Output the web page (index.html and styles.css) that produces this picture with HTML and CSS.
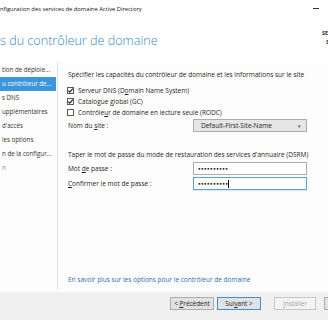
FILE: index.html
```html
<!DOCTYPE html>
<html lang="fr">
<head>
    <meta charset="UTF-8">
    <meta name="viewport" content="width=device-width, initial-scale=1.0">
    <title>Assistant Configuration des services de domaine Active Directory</title>
    <link rel="stylesheet" href="styles.css">
</head>
<body>
    <div class="window">
        <div class="titlebar">
            <span class="caption">nfiguration des services de domaine Active Directory</span>
            <span class="min"></span>
        </div>

        <div class="header">
            <h1>s du contrôleur de domaine</h1>
            <div class="target">
                <div class="target-label">SERVEUR CIBLE</div>
                <div class="target-name">SRV-DC01</div>
            </div>
        </div>

        <div class="main">
            <ul class="steps">
                <li>tion de déploie...</li>
                <li class="active">u contrôleur de...</li>
                <li>s DNS</li>
                <li>upplémentaires</li>
                <li>d'accès</li>
                <li>les options</li>
                <li>n de la configur...</li>
                <li class="later">n</li>
            </ul>

            <div class="content">
                <p class="intro">Spécifier les capacités du contrôleur de domaine et les informations sur le site</p>

                <div class="check-row">
                    <span class="checkbox checked"><svg viewBox="0 0 7 7" width="7" height="7"><polyline points="1.3,3.6 2.8,5.2 5.8,1.6" fill="none" stroke="#222" stroke-width="1.2"/></svg></span>
                    <span>Serveur DNS (D<u>o</u>main Name System)</span>
                </div>
                <div class="check-row">
                    <span class="checkbox checked"><svg viewBox="0 0 7 7" width="7" height="7"><polyline points="1.3,3.6 2.8,5.2 5.8,1.6" fill="none" stroke="#222" stroke-width="1.2"/></svg></span>
                    <span>Catalogue <u>g</u>lobal (GC)</span>
                </div>
                <div class="check-row">
                    <span class="checkbox"></span>
                    <span>Contrôle<u>u</u>r de domaine en lecture seule (RODC)</span>
                </div>

                <div class="field-row site-row">
                    <span class="label">Nom du <u>s</u>ite :</span>
                    <div class="select">
                        <span>Default-First-Site-Name</span>
                        <span class="arrow">&#9662;</span>
                    </div>
                </div>

                <p class="intro dsrm">Taper le mot de passe du mode de restauration des services d'annuaire (DSRM)</p>

                <div class="field-row">
                    <span class="label">Mot <u>d</u>e passe :</span>
                    <div class="textbox">●●●●●●●●●●</div>
                </div>
                <div class="field-row">
                    <span class="label"><u>C</u>onfirmer le mot de passe :</span>
                    <div class="textbox focused">●●●●●●●●●●<span class="caret"></span></div>
                </div>

                <a class="more-link" href="#">En savoir plus sur les options pour le contrôleur de domaine</a>
            </div>
        </div>

        <div class="footer">
            <button class="btn">&lt; <u>P</u>récédent</button>
            <button class="btn default">Sui<u>v</u>ant &gt;</button>
            <button class="btn disabled"><u>I</u>nstaller</button>
            <button class="btn">Annuler</button>
        </div>
    </div>
</body>
</html>
```

FILE: styles.css
```css
* {
    margin: 0;
    padding: 0;
    box-sizing: border-box;
    font-family: 'Open Sans', 'Liberation Sans', sans-serif;
}

body {
    background-color: #ffffff;
    overflow: hidden;
}

.window {
    width: 328px;
    height: 320px;
    display: flex;
    flex-direction: column;
    overflow: hidden;
    color: #1e1e1e;
    font-size: 6.5px;
}

.titlebar {
    height: 17px;
    display: flex;
    align-items: center;
    background-color: #ffffff;
    flex-shrink: 0;
}

.caption {
    font-size: 5.8px;
    color: #111;
    white-space: nowrap;
}

.min {
    width: 6px;
    height: 1px;
    background-color: #333;
    margin-left: auto;
    margin-right: 9px;
}

.header {
    height: 45px;
    display: flex;
    align-items: flex-start;
    background-color: #ffffff;
    flex-shrink: 0;
}

.header h1 {
    margin-top: 16px;
    font-size: 12.6px;
    line-height: 16px;
    font-weight: 300;
    color: #3688c6;
    white-space: nowrap;
}

.target {
    margin-left: auto;
    margin-top: 12px;
    width: 6px;
    overflow: hidden;
    white-space: nowrap;
    font-size: 5.6px;
    font-weight: bold;
    line-height: 9px;
    color: #333;
}

.target-name {
    padding-left: 4px;
}

.main {
    flex: 1;
    display: flex;
    background-color: #fdfdfd;
}

.steps {
    width: 58px;
    list-style: none;
    padding-top: 1px;
    border-right: 1px solid #e3e3e3;
    margin-bottom: 2px;
    font-size: 6.2px;
}

.steps li {
    height: 14px;
    line-height: 14px;
    padding-left: 2px;
    margin-right: 1px;
    white-space: nowrap;
    overflow: hidden;
    color: #333;
}

.steps li.active {
    background-color: #3c96dc;
    color: #ffffff;
}

.steps li.later {
    color: #888;
}

.content {
    flex: 1;
    display: flex;
    flex-direction: column;
    padding: 8px 0 7px 10px;
}

.intro {
    line-height: 10px;
    white-space: nowrap;
    margin-bottom: 5px;
}

.intro.dsrm {
    margin-top: 16px;
    margin-bottom: 2px;
}

.check-row {
    height: 11px;
    display: flex;
    align-items: center;
    gap: 4px;
    white-space: nowrap;
}

.checkbox {
    width: 7px;
    height: 7px;
    border: 1px solid #5a5a5a;
    background-color: #ffffff;
    display: flex;
    align-items: center;
    justify-content: center;
    margin-left: -1px;
}

.checkbox svg {
    display: block;
    flex-shrink: 0;
}

.field-row {
    display: flex;
    align-items: center;
    margin-bottom: 2px;
}

.site-row {
    margin-top: 1px;
}

.label {
    width: 125px;
    white-space: nowrap;
}

.select {
    width: 114px;
    height: 13px;
    display: flex;
    align-items: center;
    justify-content: space-between;
    padding: 0 5px 0 7px;
    border: 1px solid #acacac;
    background-color: #e6e6e6;
    white-space: nowrap;
}

.arrow {
    font-size: 5px;
    color: #555;
}

.textbox {
    width: 114px;
    height: 13px;
    display: flex;
    align-items: center;
    padding-left: 4px;
    border: 1px solid #abadb3;
    background-color: #ffffff;
    font-size: 4.2px;
    letter-spacing: 0.5px;
    color: #1a1a1a;
}

.textbox.focused {
    border-color: #5a9fd8;
    box-shadow: 0 1px 1px rgba(120, 190, 170, 0.25);
}

.caret {
    width: 1px;
    height: 8px;
    background-color: #000;
}

.more-link {
    margin-top: auto;
    line-height: 10px;
    color: #2a6fb7;
    text-decoration: none;
    white-space: nowrap;
}

.footer {
    height: 28px;
    display: flex;
    align-items: flex-start;
    padding: 5px 0 0 170px;
    background-color: #f0f0f0;
    flex-shrink: 0;
}

.btn {
    width: 44px;
    height: 13px;
    flex-shrink: 0;
    font-size: 6.4px;
    color: #1e1e1e;
    background-color: #e1e1e1;
    border: 1px solid #adadad;
    margin-right: 3px;
}

.btn.default {
    border-color: #3c8fd6;
    margin-right: 13px;
}

.btn.disabled {
    width: 42px;
    color: #a5a5a5;
    background-color: #f3f3f3;
    border-color: #c6c6c6;
    margin-right: 8px;
}
```
